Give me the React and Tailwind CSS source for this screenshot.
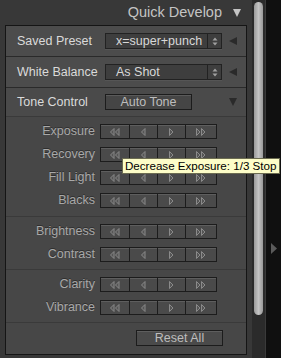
const font = { fontFamily: '"Liberation Sans", Arial, sans-serif' };

function Tri({ dir = "l", x = 0 }) {
  const d = dir === "l" ? `M${x + 4} 0.5 L${x + 0.5} 4 L${x + 4} 7.5 Z` : `M${x + 0.5} 0.5 L${x + 4} 4 L${x + 0.5} 7.5 Z`;
  return <path d={d} fill="#555" stroke="#8a8a8a" strokeWidth="1" strokeLinejoin="round" />;
}

function Arrows({ dir, double }) {
  return (
    <svg width={double ? 10 : 5} height="8" viewBox={`0 0 ${double ? 10 : 5} 8`}>
      <Tri dir={dir} x={0} />
      {double && <Tri dir={dir} x={5} />}
    </svg>
  );
}

function Stepper() {
  return (
    <div className="flex">
      {[
        ["w-[30px]", "l", true],
        ["w-[29px]", "l", false],
        ["w-[29px]", "r", false],
        ["w-[32px]", "r", true],
      ].map(([w, dir, dbl], i) => (
        <div
          key={i}
          className={`${w} h-[15px] flex items-center justify-center bg-[#4a4a4a] border border-[#1c1c1c] shadow-[inset_0_1px_0_#5e5e5e] ${i > 0 ? "-ml-px" : ""}`}
        >
          <Arrows dir={dir} double={dbl} />
        </div>
      ))}
    </div>
  );
}

function Row({ label }) {
  return (
    <div className="flex items-center h-[15px]">
      <div className="w-[94px] pr-[5px] text-right text-[12.5px] text-[#a9a9a9] [text-shadow:0_-1px_0_#2e2e2e]">{label}</div>
      <Stepper />
    </div>
  );
}

function Select({ value }) {
  return (
    <div className="w-[117px] h-[16px] flex bg-[#3e3e3e] border border-[#222] shadow-[0_1px_0_#555]">
      <div className="flex-1 pl-[10px] text-[12.5px] leading-[14px] text-[#d8d8d8]">{value}</div>
      <div className="w-[14px] border-l border-[#222] flex items-center justify-center">
        <svg width="6" height="9" viewBox="0 0 6 9">
          <path d="M0.5 3.5 L3 0.5 L5.5 3.5 Z M0.5 5.5 L3 8.5 L5.5 5.5 Z" fill="#a0a0a0" />
        </svg>
      </div>
    </div>
  );
}

function LeftArrow() {
  return (
    <svg width="8" height="8" viewBox="0 0 8 8" className="ml-[7px]">
      <path d="M8 0 L0 4 L8 8 Z" fill="#2a2a2a" />
    </svg>
  );
}

export default function App() {
  return (
    <div className="relative w-[281px] h-[358px] flex bg-[#101010] overflow-hidden select-none" style={font}>
      {/* main column */}
      <div className="w-[252px] h-full flex flex-col bg-[#383838] pl-[5px] pr-[5px]">
        <div className="h-[25px] shrink-0 flex items-center justify-end pr-[6px] gap-[11px] text-[14.5px] text-[#c4c4c4]">
          <span>Quick Develop</span>
          <svg width="8" height="8" viewBox="0 0 8 8">
            <path d="M0 0 L8 0 L4 8 Z" fill="#c4c4c4" />
          </svg>
        </div>
        <div className="w-[242px] h-[330px] border border-[#151515] bg-[#474747] flex flex-col text-[12.5px]">
          <div className="h-[31px] flex items-center pl-[11px] bg-[#4c4c4c] border-b border-[#2a2a2a]">
            <span className="w-[88px] text-[#dadada]">Saved Preset</span>
            <Select value="x=super+punch" />
            <LeftArrow />
          </div>
          <div className="h-[31px] flex items-center pl-[11px] bg-[#4c4c4c] border-b border-[#2a2a2a]">
            <span className="w-[88px] text-[#dadada]">White Balance</span>
            <Select value="As Shot" />
            <LeftArrow />
          </div>
          <div className="h-[29px] flex items-center pl-[11px] bg-[#4a4a4a] border-b border-[#3a3a3a]">
            <span className="w-[88px] text-[#dadada]">Tone Control</span>
            <div className="w-[87px] h-[16px] flex items-center justify-center bg-[#454545] border border-[#1c1c1c] shadow-[inset_0_1px_0_#5a5a5a] text-[12.5px] text-[#bdbdbd]">
              Auto Tone
            </div>
            <svg width="8" height="8" viewBox="0 0 8 8" className="ml-[37px]">
              <path d="M0 0 L8 0 L4 8 Z" fill="#2a2a2a" />
            </svg>
          </div>
          <div className="flex flex-col gap-[8px] pt-[7px] pb-[8px] border-b border-[#3a3a3a]">
            <Row label="Exposure" />
            <Row label="Recovery" />
            <Row label="Fill Light" />
            <Row label="Blacks" />
          </div>
          <div className="flex flex-col gap-[8px] pt-[7px] pb-[7px] border-b border-[#3a3a3a]">
            <Row label="Brightness" />
            <Row label="Contrast" />
          </div>
          <div className="flex flex-col gap-[8px] pt-[7px] pb-[7px] border-b border-[#3a3a3a]">
            <Row label="Clarity" />
            <Row label="Vibrance" />
          </div>
          <div className="flex-1 flex items-start justify-end pr-[23px] pt-[7px]">
            <div className="w-[87px] h-[16px] flex items-center justify-center bg-[#4a4a4a] border border-[#1c1c1c] shadow-[inset_0_1px_0_#5e5e5e] text-[12.5px] text-[#bdbdbd]">
              Reset All
            </div>
          </div>
        </div>
      </div>
      {/* scrollbar */}
      <div className="w-[13px] h-full bg-[#2b2b2b] pl-[2px] pt-[2px]">
        <div className="w-[9px] h-[313px] rounded-[5px] bg-gradient-to-r from-[#9a9a9a] via-[#c4c4c4] to-[#9a9a9a]" />
      </div>
      <div className="w-px h-full bg-[#3a3a3a]" />
      {/* right strip */}
      <div className="flex-1 h-full flex items-center justify-center">
        <svg width="6" height="11" viewBox="0 0 6 11" className="mt-[138px]">
          <path d="M0 0 L6 5.5 L0 11 Z" fill="#5a5a5a" />
        </svg>
      </div>
      {/* tooltip */}
      <div className="absolute left-[122px] top-[158px] h-[16px] pl-[2px] pr-[3px] flex items-center bg-[#fdfdc8] border border-[#6b6b50] text-[11.6px] text-black whitespace-nowrap">
        Decrease Exposure: 1/3 Stop
      </div>
    </div>
  );
}
